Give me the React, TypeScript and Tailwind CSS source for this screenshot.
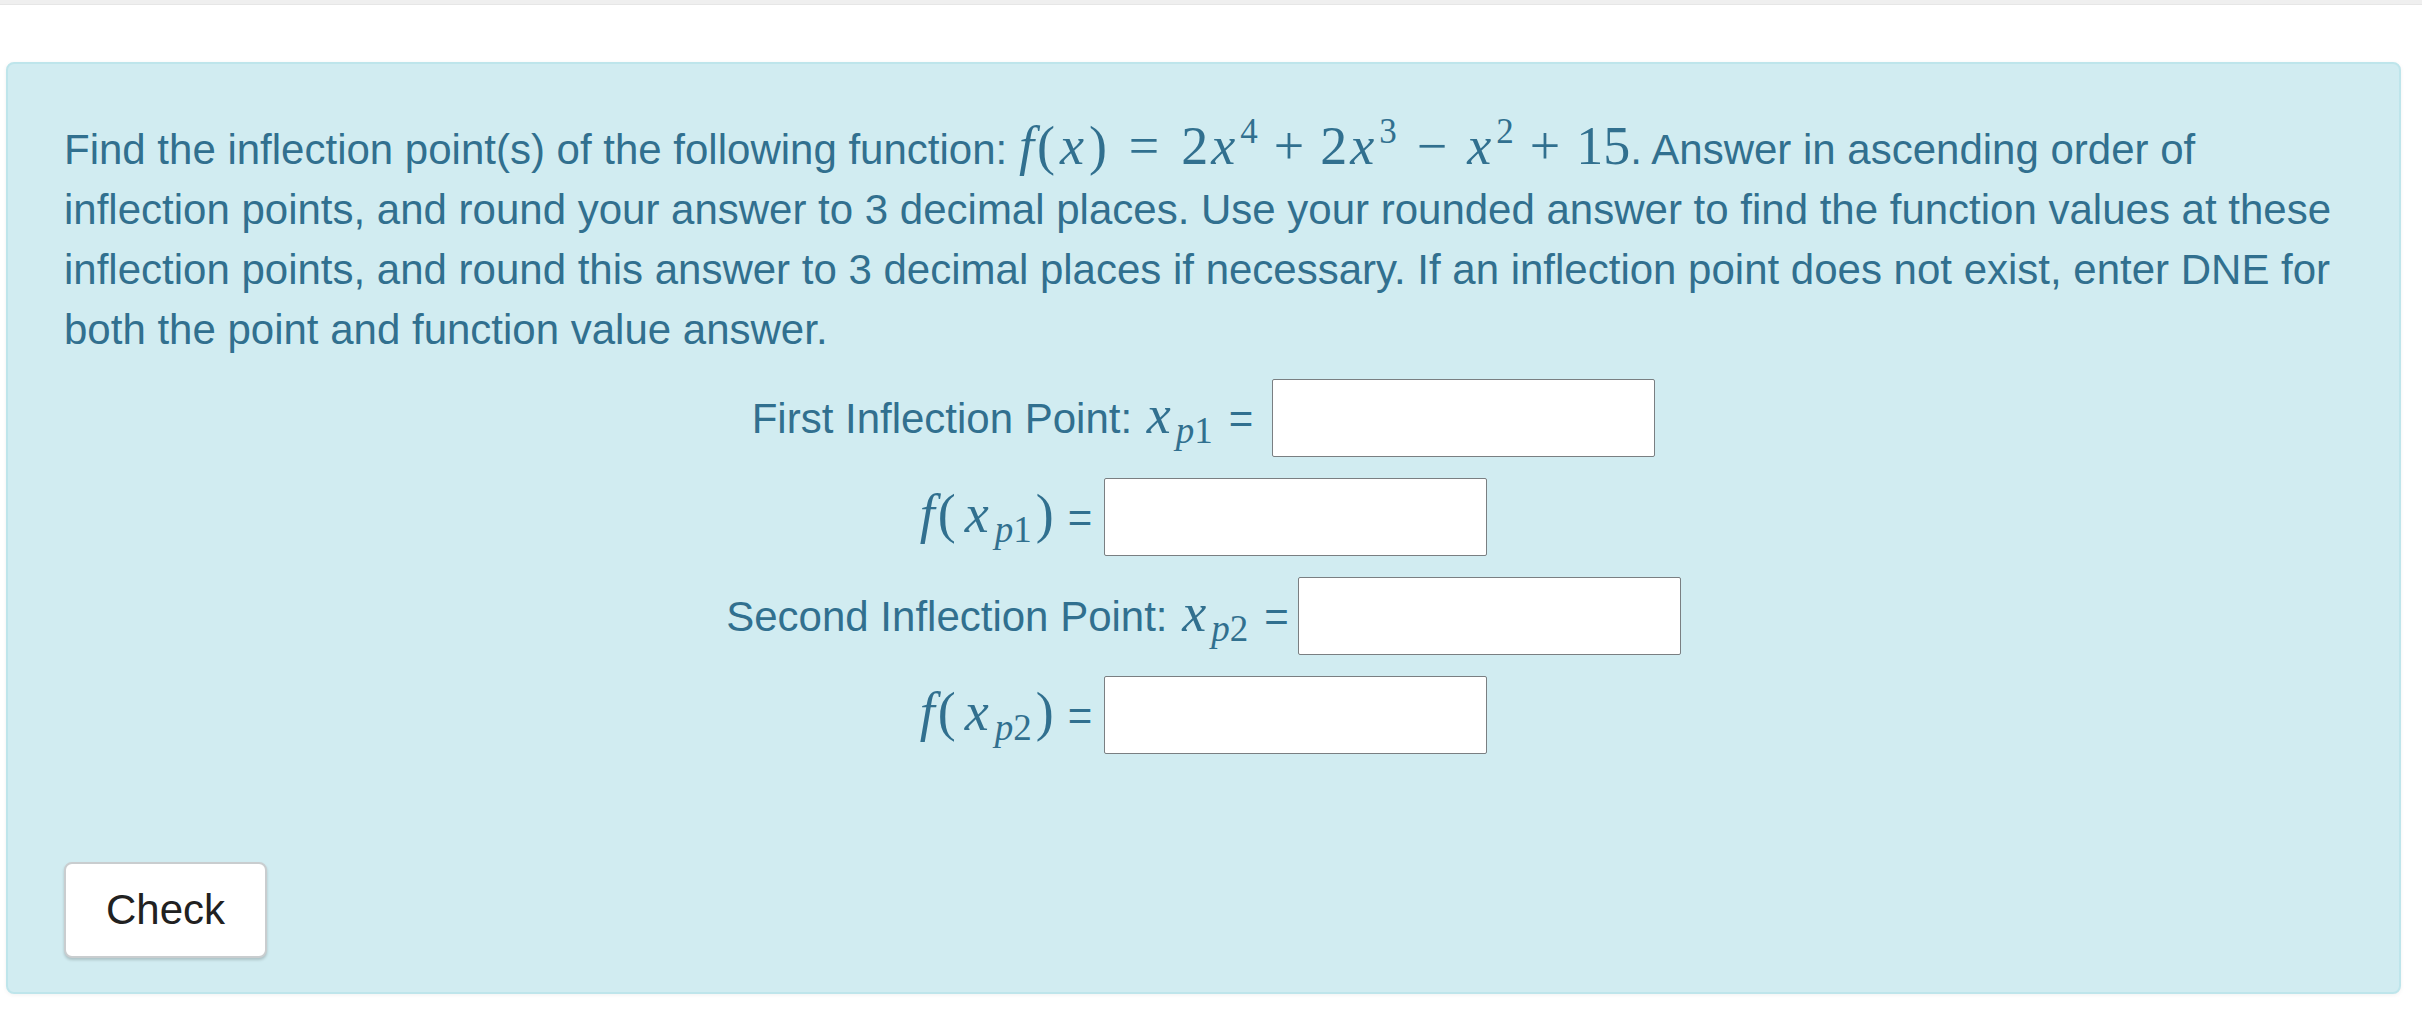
import React from "react";

const MATH = "font-['Liberation_Serif','Times_New_Roman',serif] leading-none";

function X() {
  return <span className="italic inline-block w-[30px] text-center">x</span>;
}

export default function App() {
  return (
    <div className="min-h-screen bg-white font-['Liberation_Sans',Arial,sans-serif]">
      <div className="h-[5px] bg-[#efefef] border-b border-[#e6e6e6]" />
      <div className="mt-[57px] ml-[6px] mr-[21px] rounded-[8px] border-2 border-[#bee5eb] bg-[#d1ecf1] pt-[55px] pb-[34px] px-[56px] shadow-[0_1px_4px_rgba(0,0,0,0.06)] text-[#31708f] text-[42px] leading-[60px]">
        <p>
          Find the inflection point(s) of the following function:{" "}
          <span className={MATH + " text-[54px]"}>
            <span className="italic mr-[3px]">f</span>
            <span>(</span>
            <span className="ml-[2px]"><X /></span>
            <span className="ml-[2px]">)</span>
            <span className="ml-[22px]">=</span>
            <span className="ml-[22px]">2</span>
            <X />
            <sup className="text-[35px] -top-[21px] ml-[2px]">4</sup>
            <span className="ml-[16px]">+</span>
            <span className="ml-[16px]">2</span>
            <X />
            <sup className="text-[35px] -top-[21px] ml-[2px]">3</sup>
            <span className="ml-[20px]">−</span>
            <span className="ml-[17px]"><X /></span>
            <sup className="text-[35px] -top-[21px] ml-[2px]">2</sup>
            <span className="ml-[16px]">+</span>
            <span className="ml-[16px]">15</span>
          </span>
          . Answer in ascending order of inflection points, and round your answer to 3 decimal places. Use your rounded answer to find the function values at these inflection points, and round this answer to 3 decimal places if necessary. If an inflection point does not exist, enter DNE for both the point and function value answer.
        </p>

        <div className="mt-[19px] flex flex-col gap-[21px]">
          <div className="flex items-center justify-center">
            <span>
              First Inflection Point:{" "}
              <span className={MATH + " text-[54px]"}>
                <X />
                <sub className="text-[37px] -bottom-[10px] ml-[2px]"><i>p</i>1</sub>
              </span>
              <span className="ml-[16px]">=</span>
            </span>
            <input type="text" className="ml-[19px] w-[383px] h-[78px] bg-white border-[1.5px] border-[#7a7f82] rounded-[2px] outline-none" />
          </div>

          <div className="flex items-center justify-center">
            <span>
              <span className={MATH + " text-[54px]"}>
                <span className="italic mr-[3px]">f</span>
                <span>(</span>
                <span className="ml-[6px]"><X /></span>
                <sub className="text-[37px] -bottom-[10px] ml-[3px]"><i>p</i>1</sub>
                <span className="ml-[4px]">)</span>
              </span>
              <span className="ml-[14px]">=</span>
            </span>
            <input type="text" className="ml-[12px] w-[383px] h-[78px] bg-white border-[1.5px] border-[#7a7f82] rounded-[2px] outline-none" />
          </div>

          <div className="flex items-center justify-center">
            <span>
              Second Inflection Point:{" "}
              <span className={MATH + " text-[54px]"}>
                <X />
                <sub className="text-[37px] -bottom-[10px] ml-[2px]"><i>p</i>2</sub>
              </span>
              <span className="ml-[16px]">=</span>
            </span>
            <input type="text" className="ml-[9px] w-[383px] h-[78px] bg-white border-[1.5px] border-[#7a7f82] rounded-[2px] outline-none" />
          </div>

          <div className="flex items-center justify-center">
            <span>
              <span className={MATH + " text-[54px]"}>
                <span className="italic mr-[3px]">f</span>
                <span>(</span>
                <span className="ml-[6px]"><X /></span>
                <sub className="text-[37px] -bottom-[10px] ml-[3px]"><i>p</i>2</sub>
                <span className="ml-[4px]">)</span>
              </span>
              <span className="ml-[14px]">=</span>
            </span>
            <input type="text" className="ml-[12px] w-[383px] h-[78px] bg-white border-[1.5px] border-[#7a7f82] rounded-[2px] outline-none" />
          </div>
        </div>

        <div className="mt-[108px]">
          <button type="button" className="rounded-[8px] border-2 border-[#c9cdcf] bg-white px-[40px] py-[16px] text-[#212121] leading-[60px] shadow-[0_2px_3px_rgba(0,0,0,0.18)]">
            Check
          </button>
        </div>
      </div>
    </div>
  );
}
